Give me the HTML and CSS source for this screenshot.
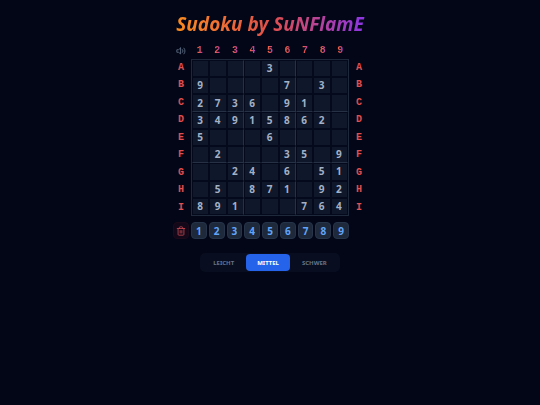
FILE: index.html
```html
<!DOCTYPE html>
<html lang="de">

<head>
    <meta charset="UTF-8">
    <meta name="viewport" content="width=device-width, initial-scale=1.0">
    <title>Sudoku by SuNFlamE</title>
    <link rel="stylesheet" href="styles.css">
</head>

<body>
    <main class="container">
        <h1>Sudoku by SuNFlamE</h1>

        <div class="game">
            <button type="button" class="sound" aria-label="Ton">
                <svg viewBox="0 0 24 24"><path d="M11 5 6 9H2v6h4l5 4V5zM15.5 8.5a5 5 0 0 1 0 7M19 5a10 10 0 0 1 0 14" /></svg>
            </button>
            <div class="columns" id="columns"></div>
            <div class="rows left"></div>
            <div class="board" id="board"></div>
            <div class="rows right"></div>
            <button type="button" class="delete" aria-label="Löschen">
                <svg viewBox="0 0 24 24"><path d="M3 6h18M19 6v14a2 2 0 0 1-2 2H7a2 2 0 0 1-2-2V6M8 6V4a2 2 0 0 1 2-2h4a2 2 0 0 1 2 2v2M10 11v6M14 11v6" /></svg>
            </button>
            <div class="pad" id="pad"></div>
        </div>

        <div class="levels">
            <button type="button">LEICHT</button>
            <button type="button" class="active">MITTEL</button>
            <button type="button">SCHWER</button>
        </div>
    </main>

    <script>
        const puzzle = [
            '....3....',
            '9....7.3.',
            '2736.91..',
            '34915862.',
            '5...6....',
            '.2...35.9',
            '..24.6.51',
            '.5.871.92',
            '891...764'
        ];
        const board = document.getElementById('board');
        const columns = document.getElementById('columns');
        const pad = document.getElementById('pad');

        function add(parent, tag, text) {
            const el = document.createElement(tag);
            el.textContent = text;
            parent.appendChild(el);
            return el;
        }

        for (let n = 1; n <= 9; n++) {
            add(columns, 'span', n);
            add(pad, 'button', n).type = 'button';
        }

        document.querySelectorAll('.rows').forEach((side) => {
            for (const letter of 'ABCDEFGHI') {
                add(side, 'span', letter);
            }
        });

        puzzle.forEach((line, r) => {
            [...line].forEach((value, c) => {
                const cell = add(board, 'button', value === '.' ? '' : value);
                cell.type = 'button';
                cell.className = 'cell';
                cell.setAttribute('aria-label', 'ABCDEFGHI'[r] + (c + 1));
                if (c === 2 || c === 5) cell.classList.add('box-right');
                if (r === 2 || r === 5) cell.classList.add('box-bottom');
            });
        });
    </script>
</body>

</html>
```
FILE: styles.css
```css
* {
    box-sizing: border-box;
}

body {
    font-family: "Noto Sans", sans-serif;
    margin: 0;
    background-color: #020617;
    color: #94a3b8;
}

.container {
    display: flex;
    flex-direction: column;
    align-items: center;
    padding: 10px;
}

h1 {
    margin: 0;
    padding: 0 2px;
    font-size: 19px;
    line-height: 28px;
    font-weight: 700;
    font-style: italic;
    background: linear-gradient(to right, #fb8c1e, #e2504a, #8b35e6);
    -webkit-background-clip: text;
    background-clip: text;
    color: transparent;
}

button {
    display: flex;
    align-items: center;
    justify-content: center;
    margin: 0;
    padding: 0;
    border: none;
    background: none;
    color: inherit;
    font-family: inherit;
    font-weight: 700;
    cursor: pointer;
}

svg {
    width: 10px;
    height: 10px;
    fill: none;
    stroke: currentColor;
    stroke-width: 2;
    stroke-linecap: round;
    stroke-linejoin: round;
}

.game {
    display: grid;
    grid-template-columns: 20px 158px 20px;
    margin-top: 4px;
}

.sound {
    color: #64748b;
}

.columns,
.board,
.pad {
    display: grid;
    grid-template-columns: repeat(9, 1fr);
    grid-column: 2;
}

.columns,
.rows {
    font-family: "Liberation Mono", monospace;
    font-size: 10px;
    line-height: 17px;
    font-weight: 700;
    text-align: center;
}

.columns span {
    justify-self: center;
    background: linear-gradient(to right, #f9733a, #e0505a, #9d3fd0);
    -webkit-background-clip: text;
    background-clip: text;
    color: transparent;
}

.rows {
    display: grid;
    grid-template-rows: repeat(9, 1fr);
    color: #e04f50;
}

.left {
    grid-column: 1;
}

.board {
    grid-auto-rows: 1fr;
    height: 157px;
    border: 1px solid #1e293b;
}

.cell {
    min-width: 0;
    min-height: 0;
    padding: 0 1px 1px 0;
    border: 1px solid #040a1c;
    background-color: #0f172a;
    color: #a3b1c6;
    font-size: 10px;
    line-height: 14px;
}

.box-right {
    border-right-color: #263145;
}

.box-bottom {
    border-bottom-color: #263145;
}

.delete,
.pad {
    margin-top: 6px;
}

.delete {
    grid-column: 1;
    margin-right: 2px;
    margin-left: 2px;
    border: 1px solid #1c0a1a;
    border-radius: 4px;
    background-color: #12081a;
    color: #c4484f;
}

.pad {
    gap: 2px;
}

.pad button {
    height: 17px;
    border: 1px solid #263449;
    border-radius: 4px;
    background-color: #1e293b;
    color: #60a5fa;
    font-size: 10px;
    line-height: 14px;
}

.levels {
    display: flex;
    margin-top: 14px;
    padding: 1px;
    border-radius: 5px;
    background-color: #080e1f;
}

.levels button {
    height: 17px;
    padding: 0 12px;
    border-radius: 4px;
    color: #64748b;
    font-size: 6px;
}

.levels .active {
    padding: 0 11px;
    background-color: #2563eb;
    color: #fff;
}
```
